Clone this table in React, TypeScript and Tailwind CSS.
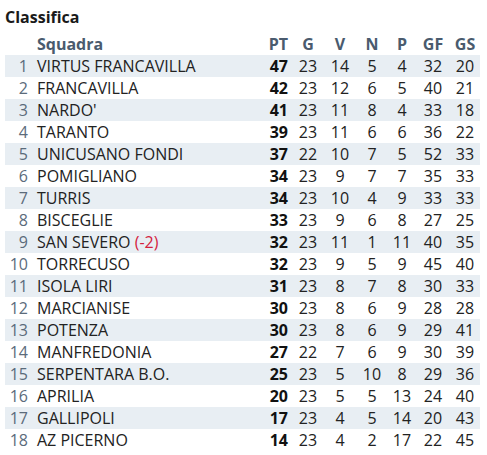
const rows: [number, string, number, number, number, number, number, number, number, string?][] = [
  [1, 'VIRTUS FRANCAVILLA', 47, 23, 14, 5, 4, 32, 20],
  [2, 'FRANCAVILLA', 42, 23, 12, 6, 5, 40, 21],
  [3, "NARDO'", 41, 23, 11, 8, 4, 33, 18],
  [4, 'TARANTO', 39, 23, 11, 6, 6, 36, 22],
  [5, 'UNICUSANO FONDI', 37, 22, 10, 7, 5, 52, 33],
  [6, 'POMIGLIANO', 34, 23, 9, 7, 7, 35, 33],
  [7, 'TURRIS', 34, 23, 10, 4, 9, 33, 33],
  [8, 'BISCEGLIE', 33, 23, 9, 6, 8, 27, 25],
  [9, 'SAN SEVERO', 32, 23, 11, 1, 11, 40, 35, '(-2)'],
  [10, 'TORRECUSO', 32, 23, 9, 5, 9, 45, 40],
  [11, 'ISOLA LIRI', 31, 23, 8, 7, 8, 30, 33],
  [12, 'MARCIANISE', 30, 23, 8, 6, 9, 28, 28],
  [13, 'POTENZA', 30, 23, 8, 6, 9, 29, 41],
  [14, 'MANFREDONIA', 27, 22, 7, 6, 9, 30, 39],
  [15, 'SERPENTARA B.O.', 25, 23, 5, 10, 8, 29, 36],
  [16, 'APRILIA', 20, 23, 5, 5, 13, 24, 40],
  [17, 'GALLIPOLI', 17, 23, 4, 5, 14, 20, 43],
  [18, 'AZ PICERNO', 14, 23, 4, 2, 17, 22, 45],
]

export default function App() {
  return (
    <div className="w-[487px] h-[455px] bg-white font-['Open_Sans',sans-serif] text-[16px] text-[#222]">
      {/* titolo */}
      <div className="h-[33px] pt-[6px] pl-[5px] leading-[22px] font-bold text-[#1a1a1a]">Classifica</div>

      <div className="mx-[5px] w-[475px]">
        {/* intestazione */}
        <div className="flex h-[22px] items-center font-bold text-[#4a5b6e] leading-[22px]">
          <div className="w-[27px]" />
          <div className="flex-1 pl-[5px]">Squadra</div>
          <div className="w-[40px] text-right">PT</div>
          <div className="w-[40px] text-center">G</div>
          <div className="w-[24px] text-center">V</div>
          <div className="w-[40px] text-center">N</div>
          <div className="w-[20px] text-center">P</div>
          <div className="w-[42px] text-center">GF</div>
          <div className="w-[22px] text-center">GS</div>
          <div className="w-[4px]" />
        </div>

        {rows.map((r, i) => (
          <div
            key={r[0]}
            className={`flex h-[22px] items-center leading-[22px] ${i % 2 === 0 ? 'bg-[#e8eef3]' : ''}`}
          >
            <div className="w-[27px] text-right pr-[4px] text-[#5b6b7b]">{r[0]}</div>
            <div className="flex-1 pl-[5px] whitespace-nowrap">
              {r[1]}
              {r[9] && <span className="text-[#d4213d]"> {r[9]}</span>}
            </div>
            <div className="w-[40px] text-right font-bold text-[#111]">{r[2]}</div>
            <div className="w-[40px] text-center">{r[3]}</div>
            <div className="w-[24px] text-center">{r[4]}</div>
            <div className="w-[40px] text-center">{r[5]}</div>
            <div className="w-[20px] text-center">{r[6]}</div>
            <div className="w-[42px] text-center">{r[7]}</div>
            <div className="w-[22px] text-center">{r[8]}</div>
            <div className="w-[4px]" />
          </div>
        ))}
      </div>
    </div>
  )
}
